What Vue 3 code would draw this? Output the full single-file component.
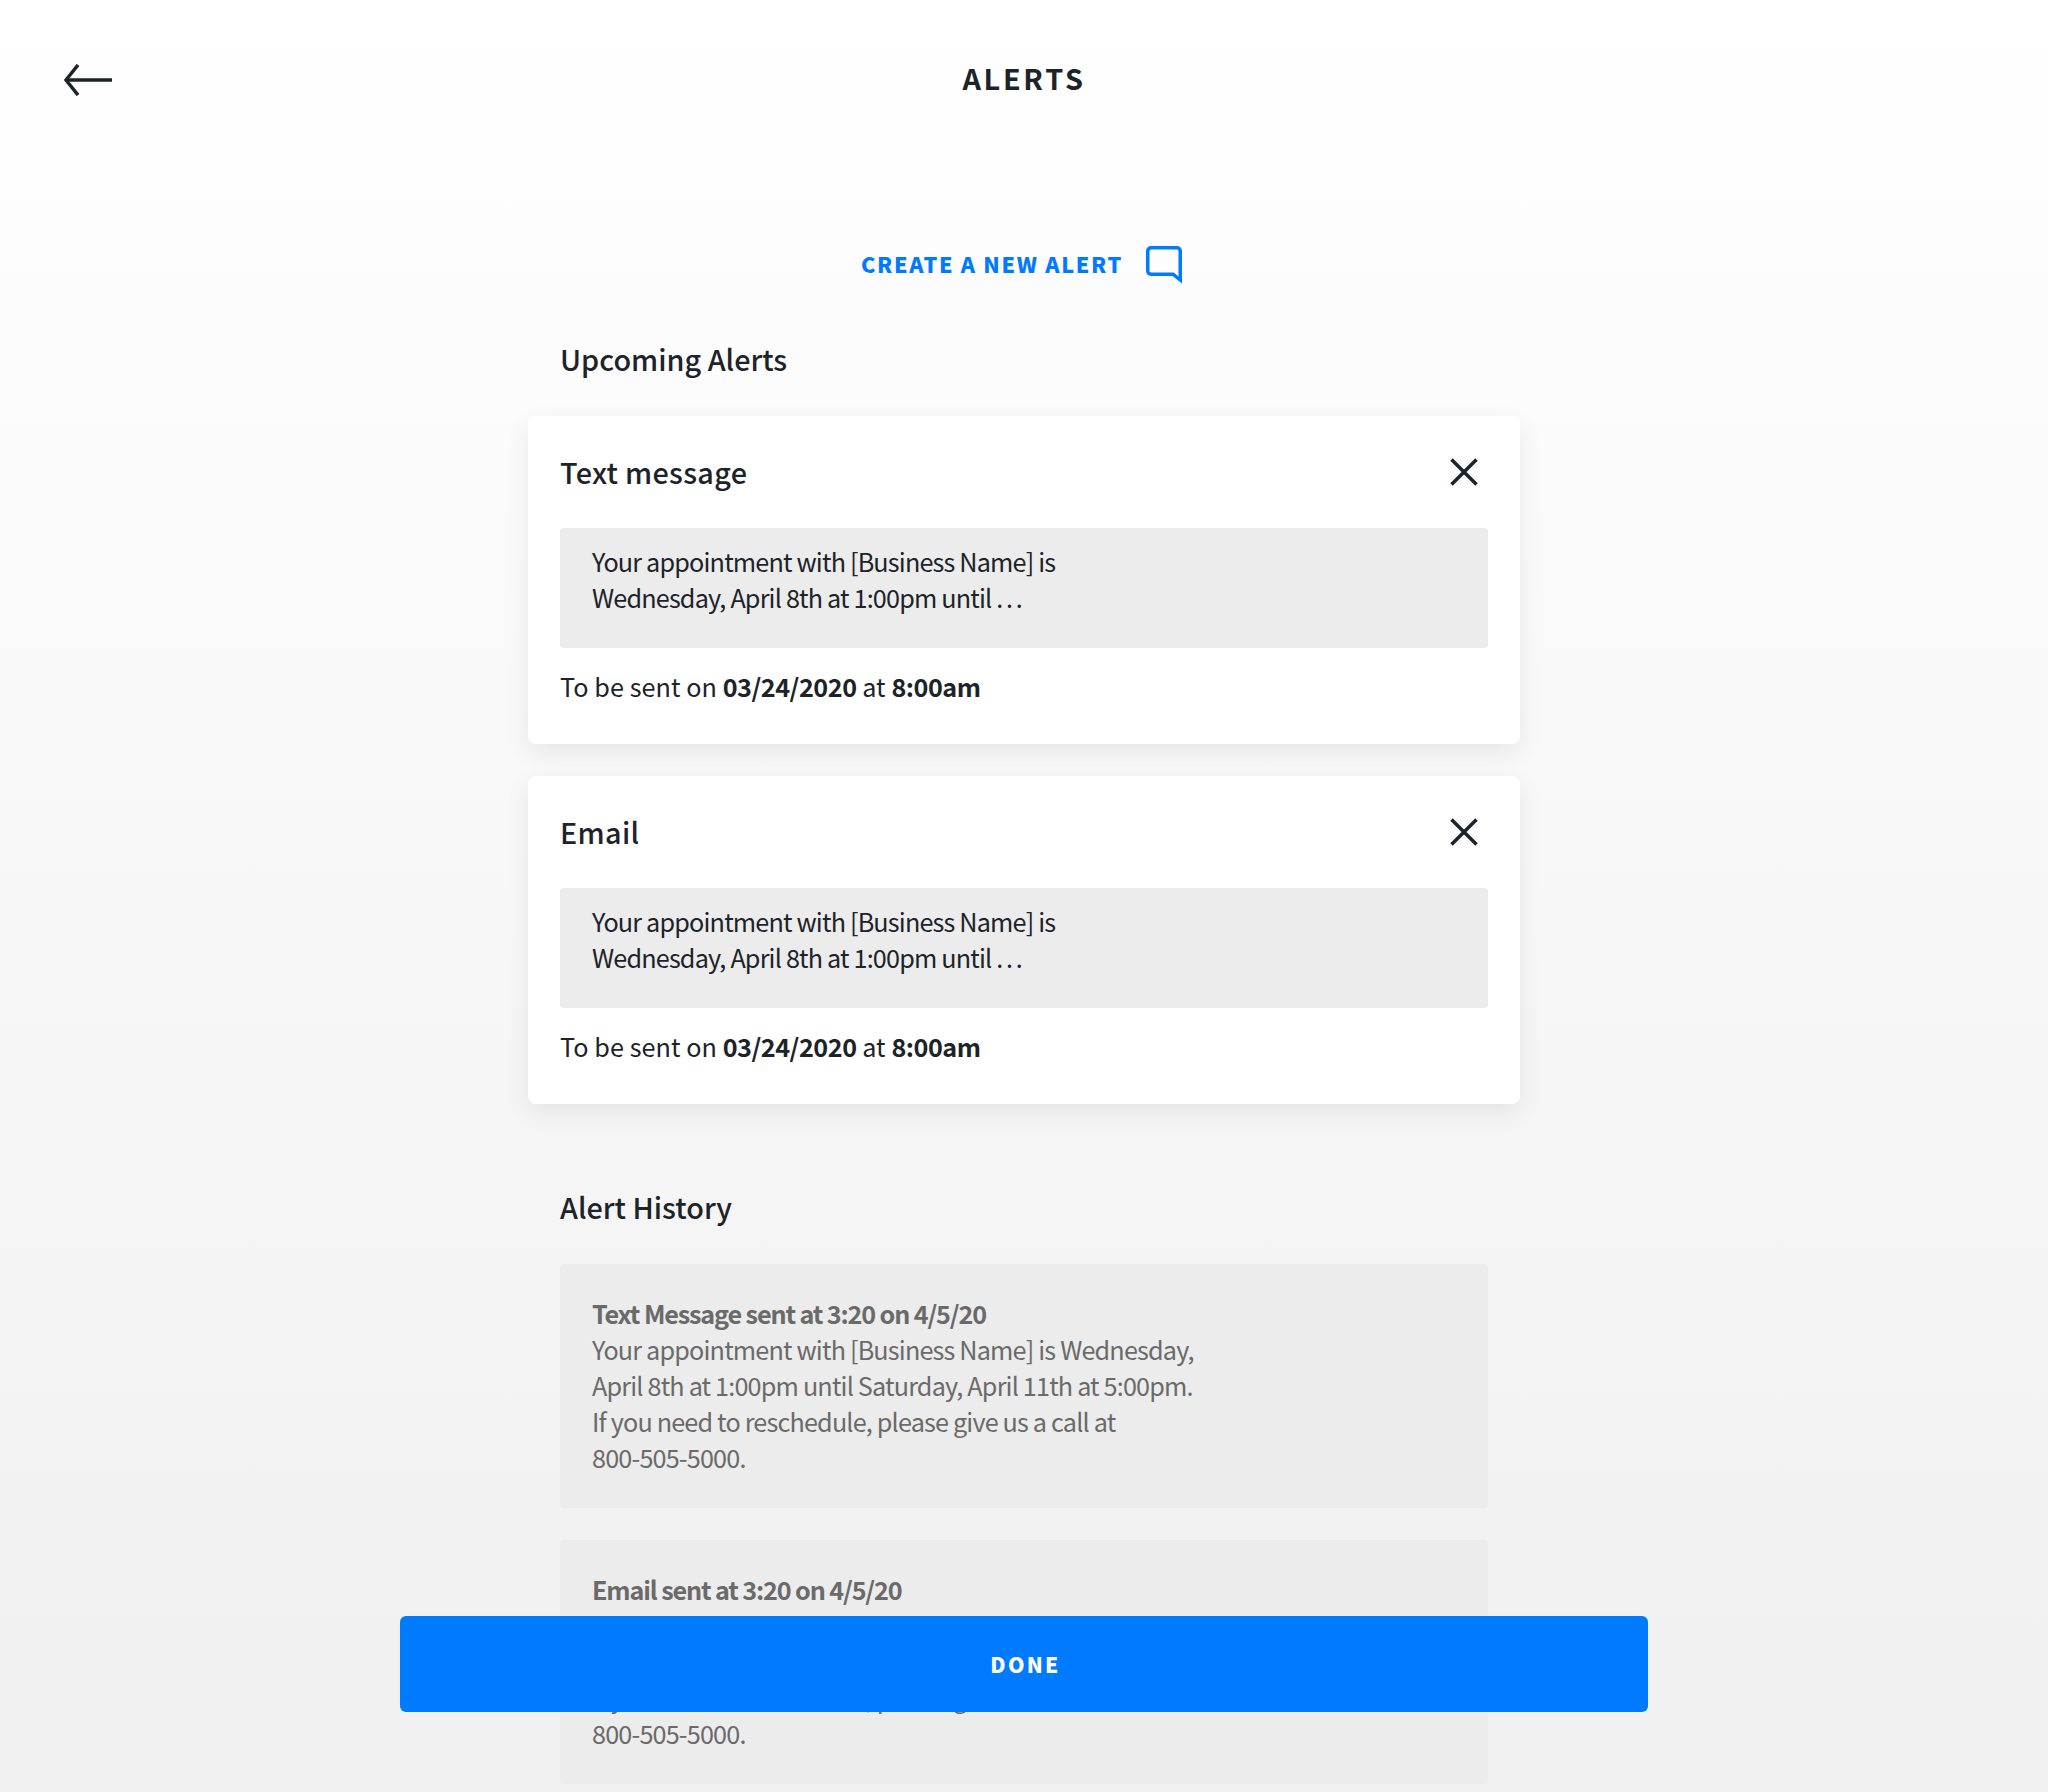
<template>
  <div class="page">
    <header class="top-bar">
      <button class="back-btn" aria-label="Back">
        <svg width="48" height="32" viewBox="0 0 48 32" fill="none" stroke="#1c2329" stroke-width="3.5">
          <path d="M48 16H2" />
          <path d="M14 1L2 16L14 31" />
        </svg>
      </button>
      <h1 class="page-title">ALERTS</h1>
    </header>

    <main class="content">
      <a class="create-link">
        <span class="create-label">CREATE A NEW ALERT</span>
        <svg width="36" height="38" viewBox="0 0 36 38" fill="none" stroke="#007aff" stroke-width="3.5">
          <path d="M5 1.75H31A3.25 3.25 0 0 1 34.25 5V34L27 28.25H5A3.25 3.25 0 0 1 1.75 25V5A3.25 3.25 0 0 1 5 1.75Z" />
        </svg>
      </a>

      <h2 class="section-title upcoming">Upcoming Alerts</h2>

      <section v-for="a in upcoming" :key="a.type" class="alert-card">
        <div class="card-head">
          <h3 class="card-title">{{ a.type }}</h3>
          <svg class="close-icon" width="28" height="28" viewBox="0 0 28 28" stroke="#1c2329" stroke-width="3.5">
            <path d="M1.5 1.5L26.5 26.5M26.5 1.5L1.5 26.5" />
          </svg>
        </div>
        <div class="preview">
          Your appointment with [Business Name] is<br />
          Wednesday, April 8th at 1:00pm until <span class="dots">. . .</span>
        </div>
        <p class="send-time">To be sent on <b>03/24/2020</b> at <b>8:00am</b></p>
      </section>

      <h2 class="section-title history">Alert History</h2>

      <div v-for="h in history" :key="h" class="history-item">
        <b>{{ h }} sent at 3:20 on 4/5/20</b><br />
        Your appointment with [Business Name] is Wednesday,<br />
        April 8th at 1:00pm until Saturday, April 11th at 5:00pm.<br />
        If you need to reschedule, please give us a call at<br />
        800-505-5000.
      </div>
    </main>

    <button class="done-btn">DONE</button>
  </div>
</template>

<script setup>
const upcoming = [{ type: 'Text message' }, { type: 'Email' }]
const history = ['Text Message', 'Email']
</script>

<style>
html, body {
  margin: 0;
  background: #f0f0f0;
}
</style>

<style scoped>
.page {
  position: relative;
  width: 2048px;
  height: 1792px;
  overflow: hidden;
  background: linear-gradient(180deg, #ffffff 0%, #f0f0f0 100%);
  font-family: "Noto Sans CJK JP", "Noto Sans", sans-serif;
  color: #1c2329;
}
.top-bar {
  position: relative;
  height: 160px;
  box-sizing: border-box;
  padding-bottom: 4px;
  display: flex;
  align-items: center;
  justify-content: center;
}
.back-btn {
  position: absolute;
  left: 64px;
  top: 64px;
  padding: 0;
  border: 0;
  background: none;
  line-height: 0;
}
.page-title {
  margin: 0;
  font-size: 28.8px;
  line-height: 40px;
  font-weight: 700;
  letter-spacing: 2.7px;
}
.content {
  width: 992px;
  margin: 0 auto;
}
.create-link {
  display: flex;
  align-items: center;
  justify-content: center;
  gap: 23px;
  height: 50px;
  margin-top: 80px;
  padding-right: 5px;
  color: #007aff;
  font-size: 21.6px;
  font-weight: 900;
  letter-spacing: 1.67px;
}
.create-label {
  padding-bottom: 3px;
}
.section-title {
  margin: 0 32px;
  font-size: 28.8px;
  line-height: 40px;
  font-weight: 500;
}
.upcoming {
  margin-top: 49px;
  margin-bottom: 37px;
}
.alert-card {
  height: 328px;
  box-sizing: border-box;
  padding: 32px;
  margin-bottom: 32px;
  background: #fff;
  border-radius: 8px;
  box-shadow: 0 8px 24px rgba(0, 0, 0, 0.08);
}
.card-head {
  display: flex;
  align-items: center;
  justify-content: space-between;
  height: 48px;
  margin-bottom: 32px;
  padding-right: 10px;
}
.card-title {
  margin: 0 0 1px;
  font-size: 28.8px;
  line-height: 48px;
  font-weight: 500;
  letter-spacing: 0.3px;
}
.preview {
  height: 120px;
  box-sizing: border-box;
  padding: 15px 32px;
  background: #ececec;
  border-radius: 4px;
  font-size: 25.2px;
  line-height: 36px;
  letter-spacing: -0.82px;
}
.dots {
  word-spacing: -1.2px;
}
.send-time {
  margin: 20px 0 0;
  font-size: 25.2px;
  line-height: 36px;
  letter-spacing: 0.06px;
}
.send-time b {
  font-weight: 700;
  letter-spacing: -0.45px;
}
.history {
  margin-top: 81px;
  margin-bottom: 35px;
  line-height: 44px;
}
.history-item {
  box-sizing: border-box;
  height: 244px;
  padding: 31px 32px 0;
  margin: 0 32px 32px;
  background: #ececec;
  border-radius: 4px;
  color: #6a6a6a;
  font-size: 25.2px;
  line-height: 36px;
  letter-spacing: -0.82px;
}
.history-item b {
  font-weight: 700;
  letter-spacing: -1.14px;
}
.done-btn {
  position: absolute;
  left: 400px;
  top: 1616px;
  width: 1248px;
  height: 96px;
  padding: 0 0 0 3px;
  border: 0;
  border-radius: 6px;
  background: #007aff;
  color: #fff;
  font-family: inherit;
  font-size: 21px;
  font-weight: 900;
  letter-spacing: 2.3px;
}
</style>
